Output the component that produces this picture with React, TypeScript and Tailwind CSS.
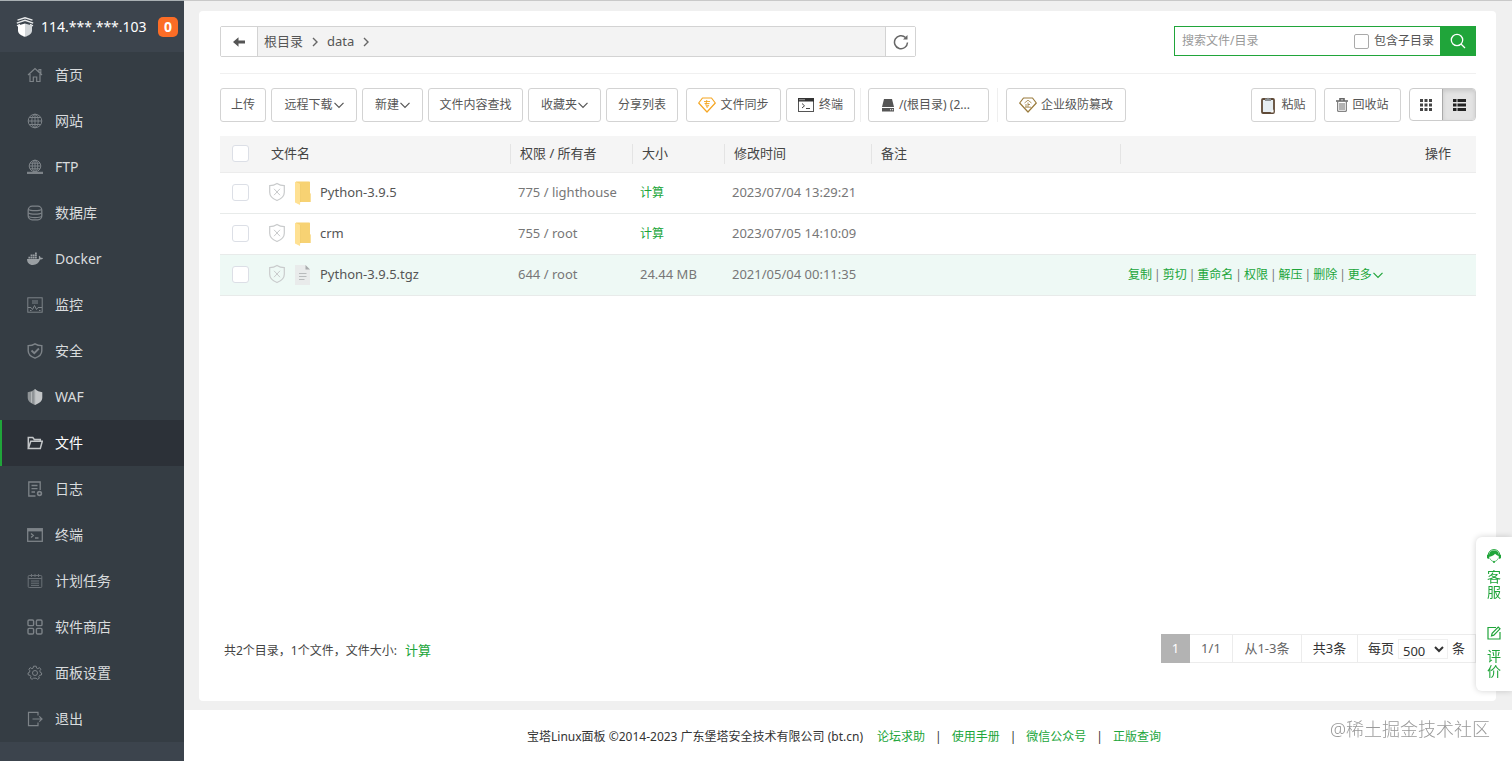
import React from "react";
import clsx from "clsx";

type IconProps = { className?: string };

const menus = [
  { name: "首页", icon: "home" },
  { name: "网站", icon: "globe" },
  { name: "FTP", icon: "ftp" },
  { name: "数据库", icon: "database" },
  { name: "Docker", icon: "docker" },
  { name: "监控", icon: "monitor" },
  { name: "安全", icon: "safe" },
  { name: "WAF", icon: "waf" },
  { name: "文件", icon: "files" },
  { name: "日志", icon: "logs" },
  { name: "终端", icon: "xterm" },
  { name: "计划任务", icon: "crontab" },
  { name: "软件商店", icon: "soft" },
  { name: "面板设置", icon: "config" },
  { name: "退出", icon: "logout" },
];

const files = [
  {
    name: "Python-3.9.5",
    dir: true,
    auth: "775 / lighthouse",
    size: "",
    time: "2023/07/04 13:29:21",
  },
  {
    name: "crm",
    dir: true,
    auth: "755 / root",
    size: "",
    time: "2023/07/05 14:10:09",
  },
  {
    name: "Python-3.9.5.tgz",
    dir: false,
    auth: "644 / root",
    size: "24.44 MB",
    time: "2021/05/04 00:11:35",
  },
];

const rowActions = ["复制", "剪切", "重命名", "权限", "解压", "删除"];
const footerLinks = ["论坛求助", "使用手册", "微信公众号", "正版查询"];

const menuIcons: Record<string, React.ReactNode> = {
  home: (
    <path
      strokeWidth="1.2"
      d="M1 8 8 1.5 15 8M12 5V2.5h1.8V6.5M3 7v7.5h3.3V10h3.4v4.5H13V7"
    />
  ),
  globe: (
    <>
      <circle cx="8" cy="8" r="6.8" />
      <ellipse cx="8" cy="8" rx="3.2" ry="6.8" />
      <path d="M8 1.2v13.6M1.2 8h13.6M2.3 4.5h11.4M2.3 11.5h11.4" />
    </>
  ),
  ftp: (
    <>
      <circle cx="8" cy="7" r="5.8" />
      <ellipse cx="8" cy="7" rx="2.8" ry="5.8" />
      <path d="M8 1v12M2.2 7h11.6M3 4.2h10M3 9.8h10" />
      <path d="M0 13.8h16M5 13.8h6" strokeWidth="2.2" />
    </>
  ),
  database: (
    <>
      <rect
        x="1.2"
        y="1.2"
        width="13.6"
        height="13.6"
        rx="4"
        strokeWidth="1.3"
      />
      <path
        strokeWidth="1.2"
        d="M1.5 4.5c2 1.5 11 1.5 13 0M1.5 8c2 1.6 11 1.6 13 0M1.5 11.4c2 1.6 11 1.6 13 0"
      />
    </>
  ),
  docker: (
    <path
      stroke="none"
      fill="#9a9fa3"
      d="M0 8h11.6c.5-.6.4-1.9.1-2.6l.7-.7c.8.6 1.2 1.4 1.2 2.1.8-.2 1.7-.1 2.4.4-.6 1.1-1.6 1.4-2.9 1.4C11.9 11.9 9.5 14 5.9 14 2 14 .1 11.6 0 8ZM1.4 5.7h1.8v1.7H1.4zM3.6 5.7h1.8v1.7H3.6zM5.8 5.7h1.8v1.7H5.8zM8 5.7h1.8v1.7H8zM3.6 3.6h1.8v1.7H3.6zM5.8 3.6h1.8v1.7H5.8zM8 3.6h1.8v1.7H8zM8 1.5h1.8v1.7H8z"
    />
  ),
  monitor: (
    <>
      <rect x="0.8" y="0.8" width="14.4" height="14.4" />
      <path d="M5 4h6M5 6h6M1 10.5h3l1.5 2 2-4 2 4 1.5-2h4M3 13.5h1.5M12 13.5h1.5" />
    </>
  ),
  safe: (
    <>
      <path
        strokeWidth="1.4"
        d="M8 .8c2 1.3 4.3 1.8 6.8 1.8v5.2c0 3.6-2.8 6-6.8 7.4-4-1.400-6.800-3.800-6.800-7.400V2.600C3.700 2.600 6 2.100 8 .8Z"
      />
      <path strokeWidth="1.8" d="m4.500 7.500 2.800 2.700 4.600-4.700" />
    </>
  ),
  waf: (
    <>
      <path
        stroke="none"
        fill="#8f9497"
        d="M8 0v16C3.5 14.3.7 12 .7 8.5V3.2C3.5 3 6 1.7 8 0Z"
      />
      <path
        stroke="none"
        fill="#c3c6c8"
        d="M8 0v16c4.5-1.7 7.3-4 7.3-7.5V3.2C12.5 3 10 1.7 8 0Z"
      />
      <path d="M4.5 2.8v11M8 .5v15" stroke="#b4b8ba" />
    </>
  ),
  files: (
    <path
      strokeWidth="1.5"
      d="M1.3 13.5V2.6h4.5l1.5 1.9h6v1.7M1.3 13.5 3.8 6.2h11.5l-2 7.3z"
    />
  ),
  logs: (
    <>
      <path
        strokeWidth="1.3"
        d="M8.5 15H1.8V1h11.4v8M4.5 4.5h6M4.5 7.7h6M4.5 11h3.5"
      />
      <circle cx="12.5" cy="12.5" r="1.9" strokeWidth="1.6" />
    </>
  ),
  xterm: (
    <>
      <rect x="0.7" y="1.7" width="14.6" height="12.6" strokeWidth="1.3" />
      <path d="M1 3.2h14" strokeWidth="2.4" />
      <path d="m4 6.5 2.3 2L4 10.5M8 11h3.5" strokeWidth="1.3" />
    </>
  ),
  crontab: (
    <g opacity="0.75">
      <rect x="1.2" y="2.5" width="13.6" height="12" rx="1" />
      <path d="M4.5 1v3M8 1v3M11.5 1v3M1.2 5.5h13.6M4 8h8M4 10.2h8M4 12.4h8" />
    </g>
  ),
  soft: (
    <g strokeWidth="1.4">
      <rect x="1" y="1" width="5.6" height="5.6" rx="1.2" />
      <rect x="9.4" y="1" width="5.6" height="5.6" rx="1.2" />
      <rect x="1" y="9.4" width="5.6" height="5.6" rx="1.2" />
      <rect x="9.4" y="9.4" width="5.6" height="5.6" rx="1.2" />
    </g>
  ),
  config: (
    <>
      <path d="m6.5 1.2-.4 1.9-1.2.6L3.2 2.6 1.9 4.3l1 1.5-.4 1.5-1.5.7.3 2 1.8.3.8 1.2-.5 1.7 1.7 1.1 1.4-1.1h2.6l1.5 1.1 1.7-1.1-.5-1.7.8-1.2 1.8-.3.3-2-1.5-.7-.4-1.5 1-1.5-1.3-1.7-1.7 1.1-1.2-.6-.4-1.9Z" />
      <circle cx="8" cy="8" r="2.5" />
    </>
  ),
  logout: (
    <path
      strokeWidth="1.2"
      d="M11 4.5V1.3H1.5v13.4H11v-3.2M5.5 8H15M12.3 5.3 15 8l-2.7 2.7"
    />
  ),
};

function MenuIcon({ name }: { name: string }) {
  return (
    <svg
      viewBox="0 0 16 16"
      className="size-4 shrink-0"
      fill="none"
      stroke="currentColor"
      strokeWidth="1"
    >
      {menuIcons[name]}
    </svg>
  );
}

function Logo() {
  return (
    <svg viewBox="0 0 18 20" className="h-5 w-[18px] shrink-0">
      <path
        d="M1.5 3.2 9 .8l7.500 2.400M.8 6.200 9 3.300l8.200 2.900M1 8.800l3-1.500M17 8.800l-3-1.500"
        fill="none"
        stroke="#e9ebec"
        strokeWidth="1.300"
      />
      <path d="M9 6.500 16 8.500v5.200c0 2.900-3.500 5-7 6.100z" fill="#d3d7da" />
      <path d="M9 6.500 2 8.500v5.200c0 2.900 3.500 5 7 6.100z" fill="#fff" />
    </svg>
  );
}

function ChevronDown({ className }: IconProps) {
  return (
    <svg
      viewBox="0 0 10 10"
      className={clsx("size-[10px] shrink-0", className)}
      fill="none"
      stroke="currentColor"
      strokeWidth="1.2"
    >
      <path d="m.5 2.8 4.5 4.5 4.5-4.5" />
    </svg>
  );
}

function ChevronRight() {
  return (
    <svg
      viewBox="0 0 8 10"
      className="h-[10px] w-2 shrink-0"
      fill="none"
      stroke="#666"
      strokeWidth="1.4"
    >
      <path d="m2 1 4 4-4 4" />
    </svg>
  );
}

function Diamond({ color, label }: { color: string; label: string }) {
  return (
    <svg viewBox="0 0 18 16" className="h-4 w-[18px] shrink-0" fill="none">
      <path
        d="M4.5 1h9L17.3 6 9 15 .7 6z"
        stroke={color}
        strokeWidth="1.2"
        strokeLinejoin="round"
      />
      {label === "enterprise" ? (
        <path
          d="M5.500 6 9 3.200 12.500 6M9 5.500V10M9 7.500h2M7 7v3M6 10.200h6"
          stroke={color}
          strokeWidth="0.8"
        />
      ) : (
        <path
          d="M6 4.500h6M6.500 6.500h5M8.800 3 7.800 8.300h3L9 10.500M8 9.300l1.500 1.200"
          stroke={color}
          strokeWidth="0.9"
        />
      )}
    </svg>
  );
}

function TerminalIcon() {
  return (
    <svg viewBox="0 0 16 14" className="h-[14px] w-4 shrink-0" fill="none">
      <rect x="0.5" y="0.5" width="15" height="13" stroke="#555" />
      <path d="M0 0h16v3.5H0z" fill="#333" />
      <path d="M1.5 1.7h1M3.5 1.7h1M5.5 1.7h1" stroke="#fff" />
      <path d="m4 5.5 2.5 2.3L4 10M8 10.5h4" stroke="#444" />
    </svg>
  );
}

function DiskIcon() {
  return (
    <svg viewBox="0 0 14 14" className="size-[14px] shrink-0" fill="#555">
      <path d="M3 1h8l2 8H1zM1 10h12v3.5H1z" />
      <path d="M9 11.3h1.2v1H9zM11 11.3h1.2v1H11z" fill="#fff" />
    </svg>
  );
}

function PasteIcon() {
  return (
    <svg viewBox="0 0 14 17" className="h-[17px] w-[14px] shrink-0">
      <rect
        x="1"
        y="2"
        width="12"
        height="14"
        rx="1"
        fill="#e6eef3"
        stroke="#5f4a37"
        strokeWidth="1.8"
      />
      <path d="M4 1.5h1.800C6 .5 8 .5 8.200 1.500H10V4H4z" fill="#8b8f92" />
      <path d="m9.500 15.500 3-3v3z" fill="#fff" />
    </svg>
  );
}

function TrashIcon() {
  return (
    <svg
      viewBox="0 0 12 14"
      className="h-[14px] w-3 shrink-0"
      fill="none"
      stroke="#666"
    >
      <path d="M0 3h12M4 2.500V.8h4v1.700" strokeWidth="1.600" />
      <path d="M1.700 3.500v9.800h8.600V3.500M4 5v7M6 5v7M8 5v7" />
    </svg>
  );
}

function ShieldIcon() {
  return (
    <svg
      viewBox="0 0 18 20"
      className="mb-0.5 h-5 w-[18px] shrink-0"
      fill="none"
      stroke="#c9cbcc"
    >
      <path
        strokeWidth="1.2"
        d="M9 1.5c2.3 1.5 4.8 2.1 7.3 2.1v6.6c0 4-3 6.6-7.3 8.3-4.3-1.7-7.3-4.3-7.3-8.3V3.6C4.2 3.6 6.7 3 9 1.5Z"
      />
      <path d="m6 6.8 6 6.4M12 6.8l-6 6.4" />
    </svg>
  );
}

function FolderIcon() {
  return (
    <svg viewBox="0 0 17 24" className="h-6 w-[17px] shrink-0">
      <path d="M2 .5h13c.6 0 1 .4 1 1V12l.7.7V21H2z" fill="#f7d273" />
      <path d="M1 .8 6.500 3v15L6 24l-5-2.500z" fill="#ffe193" />
      <path d="M6.500 3v18" stroke="#efc763" strokeWidth="0.6" />
    </svg>
  );
}

function FileIcon() {
  return (
    <svg viewBox="0 0 17 22" className="h-[22px] w-[17px] shrink-0">
      <path d="M1 1h10.500L16 5.500V21H1z" fill="#e9ebeb" />
      <path d="M11.500 1 16 5.500h-4.500z" fill="#a9acad" />
      <path d="M5 9.500h7.500M5 12.500h7.500M5 15.500h5.500" stroke="#b8bbbc" />
    </svg>
  );
}

function ToolButton({
  className,
  children,
}: {
  className: string;
  children: React.ReactNode;
}) {
  return (
    <button
      type="button"
      className={clsx(
        "flex h-[34px] shrink-0 items-center justify-center whitespace-nowrap rounded-[3px] border border-[#d3d3d3] bg-white text-xs text-[#555]",
        className
      )}
    >
      {children}
    </button>
  );
}

function CheckBox({ label }: { label: string }) {
  return (
    <input
      type="checkbox"
      aria-label={label}
      className="block size-[17px] appearance-none rounded-[3px] border border-[#dcdfe6] bg-white checked:bg-[#20a53a]"
    />
  );
}

function Sidebar() {
  return (
    <aside className="flex w-[184px] shrink-0 flex-col border-t border-[#a9b0b3] bg-[#3c444d]">
      <div className="flex h-[51px] items-center pl-4 pr-[6px]">
        <Logo />
        <span className="ml-[7px] text-sm text-white">114.***.***.103</span>
        <span className="ml-auto flex h-5 w-5 items-center justify-center rounded-[5px] bg-[#fc6d26] text-sm font-bold text-white">
          0
        </span>
      </div>
      <nav className="bg-[#353d44]">
        {menus.map((menu) => {
          const isActive = menu.icon === "files";

          return (
            <a
              key={menu.icon}
              href={"#" + menu.icon}
              className={clsx(
                "flex h-[46px] items-center gap-3 border-l-2 pl-[25px] text-sm",
                isActive
                  ? "border-[#20a53a] bg-[#2c3138] text-white"
                  : "border-transparent text-[#d9dcde]"
              )}
            >
              <span className={isActive ? "text-[#c3c6c8]" : "text-[#7d8388]"}>
                <MenuIcon name={menu.icon} />
              </span>
              {menu.name}
            </a>
          );
        })}
      </nav>
    </aside>
  );
}

function PathBar() {
  return (
    <div className="flex items-start justify-between border-b border-[#f0f0f0] pb-4">
      <div className="flex h-[31px] w-[696px] rounded-[2px] border border-[#d3d3d3] bg-[#f3f3f3]">
        <button
          type="button"
          aria-label="返回上一级"
          className="flex w-[37px] items-center justify-center border-r border-[#d3d3d3] bg-white"
        >
          <svg viewBox="0 0 12 10" className="h-[10px] w-3" fill="#555">
            <path d="M0 5 5.500.3v3.200H12v3H5.500v3.200z" />
          </svg>
        </button>
        <div className="flex flex-1 items-center gap-2 px-[6px] text-[13px] text-[#555]">
          <a href="#root">根目录</a>
          <ChevronRight />
          <a href="#data">data</a>
          <ChevronRight />
        </div>
        <button
          type="button"
          aria-label="刷新"
          className="flex w-[30px] items-center justify-center border-l border-[#d3d3d3] bg-white"
        >
          <svg
            viewBox="0 0 16 16"
            className="size-4"
            fill="none"
            stroke="#666"
            strokeWidth="1.5"
          >
            <path d="M14.500 8.500A6.500 6.500 0 1 1 12.500 3.500" />
            <path d="M14.500 1v4.500H10z" fill="#666" stroke="none" />
          </svg>
        </button>
      </div>
      <div className="flex h-[30px] w-[302px] border border-[#20a53a] text-xs">
        <input
          type="text"
          aria-label="搜索文件/目录"
          placeholder="搜索文件/目录"
          className="min-w-0 flex-1 px-[7px] outline-none placeholder:text-[#999]"
        />
        <label className="flex items-center gap-[5px] pr-[6px] text-[#555]">
          <input
            type="checkbox"
            className="size-[15px] appearance-none rounded-[2px] border border-[#aaa] checked:bg-[#20a53a]"
          />
          包含子目录
        </label>
        <button
          type="button"
          aria-label="搜索"
          className="flex w-[35px] items-center justify-center bg-[#20a53a]"
        >
          <svg
            viewBox="0 0 16 16"
            className="size-4"
            fill="none"
            stroke="#fff"
            strokeWidth="1.3"
          >
            <circle cx="7" cy="7" r="5.7" />
            <path d="m11 11 4 4" />
          </svg>
        </button>
      </div>
    </div>
  );
}

function Toolbar() {
  return (
    <div className="mt-[14px] flex items-start justify-between">
      <div className="flex items-start gap-[5px]">
        <ToolButton className="w-[46px]">上传</ToolButton>
        <ToolButton className="w-[86px] gap-px">
          远程下载 <ChevronDown />
        </ToolButton>
        <ToolButton className="w-[61px] gap-px">
          新建 <ChevronDown />
        </ToolButton>
        <ToolButton className="w-[95px]">文件内容查找</ToolButton>
        <ToolButton className="w-[73px] gap-px">
          收藏夹 <ChevronDown />
        </ToolButton>
        <ToolButton className="w-[72px]">分享列表</ToolButton>
        <ToolButton className="ml-[3px] w-[95px] gap-1">
          <Diamond color="#f5a623" label="professional" />
          文件同步
        </ToolButton>
        <ToolButton className="w-[69px] gap-[5px]">
          <TerminalIcon />
          终端
        </ToolButton>
        <div className="h-[34px] border-r border-[#efefef]" />
        <ToolButton className="ml-[2px] w-[121px] gap-1 pr-[6px]">
          <DiskIcon />
          /(根目录) (2...
        </ToolButton>
        <div className="ml-[3px] h-[34px] border-r border-[#efefef]" />
        <ToolButton className="ml-[3px] w-[120px] gap-1">
          <Diamond color="#9a7b3c" label="enterprise" />
          企业级防篡改
        </ToolButton>
      </div>
      <div className="flex items-start gap-2">
        <ToolButton className="w-[65px] gap-[6px]">
          <PasteIcon />
          粘贴
        </ToolButton>
        <ToolButton className="w-[77px] gap-1">
          <TrashIcon />
          回收站
        </ToolButton>
        <div className="flex h-[33px] overflow-hidden rounded border border-[#ccc]">
          <button
            type="button"
            aria-label="图标视图"
            className="flex w-8 items-center justify-center"
          >
            <svg viewBox="0 0 12 12" className="size-3" fill="#444">
              <path d="M0 0h3v3H0zM4.500 0h3v3h-3zM9 0h3v3H9zM0 4.500h3v3H0zM4.500 4.500h3v3h-3zM9 4.500h3v3H9zM0 9h3v3H0zM4.500 9h3v3h-3zM9 9h3v3H9z" />
            </svg>
          </button>
          <button
            type="button"
            aria-label="列表视图"
            className="flex w-[33px] items-center justify-center border-l border-[#aaa] bg-[#e3e3e3] shadow-[inset_0_2px_4px_rgba(0,0,0,0.12)]"
          >
            <svg viewBox="0 0 13 12" className="h-3 w-[13px]" fill="#222">
              <path d="M0 0h3.500v3H0zM4.500 0H13v3H4.500zM0 4.500h3.500v3H0zM4.500 4.500H13v3H4.500zM0 9h3.500v3H0zM4.500 9H13v3H4.500z" />
            </svg>
          </button>
        </div>
      </div>
    </div>
  );
}

function FileTable() {
  return (
    <table className="mt-[14px] w-full table-fixed text-left">
      <colgroup>
        <col className="w-[41px]" />
        <col className="w-[249px]" />
        <col className="w-[122px]" />
        <col className="w-[92px]" />
        <col className="w-[147px]" />
        <col />
        <col className="w-[356px]" />
      </colgroup>
      <thead>
        <tr className="h-9 border-b border-[#ececec] bg-[#f5f5f5] text-[13px] text-[#444]">
          <th className="pl-3">
            <CheckBox label="全选" />
          </th>
          <th className="pl-[10px] font-normal">文件名</th>
          {["权限 / 所有者", "大小", "修改时间", "备注"].map((title) => (
            <th key={title} className="font-normal">
              <div className="border-l border-[#e4e4e4] pl-[9px]">{title}</div>
            </th>
          ))}
          <th className="font-normal">
            <div className="border-l border-[#e4e4e4] pr-[25px] text-right">
              操作
            </div>
          </th>
        </tr>
      </thead>
      <tbody className="text-[13px] text-[#777]">
        {files.map((file) => (
          <tr
            key={file.name}
            className={clsx(
              "h-[41px] border-b border-[#e8ebea]",
              !file.dir && "bg-[#eef9f5]"
            )}
          >
            <td className="pl-3">
              <CheckBox label={file.name} />
            </td>
            <td className="pl-[7px]">
              <div className="flex items-center">
                <ShieldIcon />
                <span className="ml-2 flex w-[17px]">
                  {file.dir ? <FolderIcon /> : <FileIcon />}
                </span>
                <a href="#file" className="ml-[9px] text-[#555]">
                  {file.name}
                </a>
              </div>
            </td>
            <td className="whitespace-nowrap pl-2">{file.auth}</td>
            <td className="pl-2">
              {file.size || (
                <a href="#size" className="text-xs text-[#20a53a]">
                  计算
                </a>
              )}
            </td>
            <td className="whitespace-nowrap pl-2">{file.time}</td>
            <td></td>
            <td className="pl-2">
              {!file.dir && (
                <div className="flex items-center gap-[2px] text-xs text-[#777]">
                  {rowActions.map((action) => (
                    <React.Fragment key={action}>
                      <a href="#action" className="text-[#20a53a]">
                        {action}
                      </a>
                      <span>|</span>
                    </React.Fragment>
                  ))}
                  <a
                    href="#more"
                    className="flex items-center gap-px text-[#20a53a]"
                  >
                    更多 <ChevronDown />
                  </a>
                </div>
              )}
            </td>
          </tr>
        ))}
      </tbody>
    </table>
  );
}

function Pagination() {
  return (
    <div className="flex h-[29px] border border-[#ececec] text-[13px] leading-[27px] text-[#333]">
      <span className="-my-px -ml-px flex w-[29px] items-center justify-center bg-[#b3b3b3] text-white">
        1
      </span>
      <span className="w-[43px] border-r border-[#ececec] text-center text-[#666]">
        1/1
      </span>
      <span className="w-[69px] border-r border-[#ececec] text-center text-[#666]">
        从1-3条
      </span>
      <span className="w-14 border-r border-[#ececec] text-center">共3条</span>
      <label className="flex items-center gap-1 pl-[10px] pr-[10px]">
        每页
        <span className="flex h-5 items-center border border-[#f0f0f0]">
          <select
            defaultValue="500"
            className="h-4 w-12 bg-white pl-0 text-[13px] leading-4 outline-none"
          >
            <option>100</option>
            <option>200</option>
            <option>500</option>
          </select>
        </span>
        条
      </label>
    </div>
  );
}

function ServiceBar() {
  return (
    <div className="fixed bottom-[70px] right-0 flex h-[154px] w-9 flex-col items-center rounded-l-md bg-white pt-3 text-sm leading-[15px] text-[#20a53a] shadow-[0_0_6px_rgba(0,0,0,0.18)]">
      <a href="#service" className="flex w-[14px] flex-col items-center">
        <svg viewBox="0 0 14 14" className="mb-[6px] size-[14px]" fill="none">
          <path
            d="M1.200 6.500C1.200 2.800 3.800.6 7 .6s5.800 2.200 5.800 5.900"
            stroke="#20a53a"
          />
          <path
            d="M7 1.600c-2.900 0-5 2-5 4.900v1.300C4.500 7.600 6.800 6.600 8 4.800c1.200 1.200 2.600 2 4 2.300v-.6c0-2.900-2.100-4.900-5-4.900Z"
            fill="#20a53a"
          />
          <path d="M0 5.800h2.300v4H1.200C.4 9.800 0 9.300 0 8.600zM14 5.800h-2.300v4h1.100c.8 0 1.200-.5 1.200-1.200z" fill="#20a53a" />
          <path
            d="M3 9.500c.8 1.800 2.200 3 4 3s3.300-1.200 4-3"
            stroke="#20a53a"
            strokeWidth="0.7"
          />
          <circle cx="7" cy="13" r="1" fill="#20a53a" />
        </svg>
        客服
      </a>
      <a href="#comment" className="mt-[27px] flex w-[14px] flex-col items-center">
        <svg
          viewBox="0 0 14 14"
          className="mb-2 size-[14px]"
          fill="none"
          stroke="#20a53a"
          strokeWidth="1.2"
        >
          <path d="M9 1.500H1v11.500h12V6" />
          <path d="m4.500 9.800.6-2.500L11.200 1l1.800 1.800-6.200 6.300z" />
        </svg>
        评价
      </a>
    </div>
  );
}

export default function App() {
  return (
    <div className="flex min-h-screen bg-[#f0f0f0] font-['Noto_Sans','Noto_Sans_CJK_SC',sans-serif]">
      <Sidebar />
      <div className="flex min-w-0 flex-1 flex-col border-t border-[#c9c9c9]">
        <main className="mb-[9px] ml-[15px] mr-4 mt-[10px] flex flex-1 flex-col rounded-[4px] bg-white pb-[38px] pl-[21px] pr-5 pt-[15px]">
          <PathBar />
          <Toolbar />
          <FileTable />
          <div className="mt-auto flex items-end justify-between pl-1">
            <p className="pb-1 text-xs text-[#444]">
              共2个目录，1个文件，文件大小:
              <a href="#total" className="ml-2 text-[13px] text-[#20a53a]">
                计算
              </a>
            </p>
            <Pagination />
          </div>
        </main>
        <footer className="flex h-[51px] items-center justify-center bg-white pr-2 pt-[3px] text-xs text-[#333]">
          <span className="mr-[14px]">
            宝塔Linux面板 ©2014-2023 广东堡塔安全技术有限公司 (bt.cn)
          </span>
          {footerLinks.map((link, index) => (
            <React.Fragment key={link}>
              {index > 0 && <span className="mx-[10px]">|</span>}
              <a href="#help" className="text-[#20a53a]">
                {link}
              </a>
            </React.Fragment>
          ))}
        </footer>
      </div>
      <ServiceBar />
      <div className="pointer-events-none fixed bottom-5 right-[22px] text-lg leading-6 font-light text-[#999]">
        @稀土掘金技术社区
      </div>
    </div>
  );
}
